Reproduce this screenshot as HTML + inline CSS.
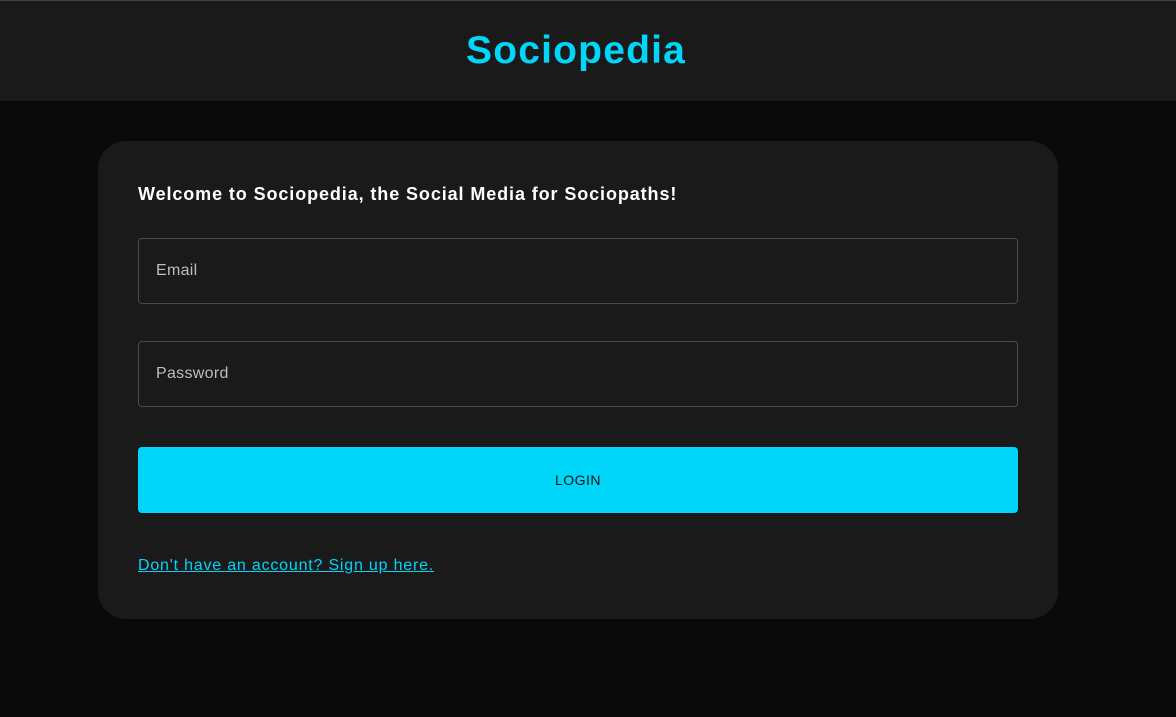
<!DOCTYPE html>
<html><head><style>
*{box-sizing:border-box;margin:0;padding:0}
body{width:1176px;height:717px;background:#0a0a0a;font-family:"Liberation Sans",sans-serif;overflow:hidden;position:relative}
.top{position:absolute;left:0;top:0;width:1176px;height:1px;background:#444}
.hdr{position:absolute;left:0;top:1px;width:1176px;height:100px;background:#1a1a1a}
.hdr span{position:absolute;left:466px;top:28px;width:220px;text-align:center;font-size:39px;font-weight:bold;color:#00d5fa;letter-spacing:1.2px;line-height:44px;white-space:nowrap}
.card{position:absolute;left:98px;top:141px;width:960px;height:478px;background:#1a1a1a;border-radius:28px}
.welcome{position:absolute;left:40px;top:43px;font-size:18px;font-weight:bold;color:#fff;letter-spacing:0.9px;white-space:nowrap}
.inp{position:absolute;left:40px;width:880px;height:66px;border:1px solid #4a4a4a;border-radius:4px;color:#bdbdbd;font-size:16px;padding:23px 17px;letter-spacing:0.3px}
.btn{position:absolute;left:40px;top:306px;width:880px;height:66px;background:#00d5fa;border-radius:4px;text-align:center;line-height:66px;font-size:14px;color:#111;letter-spacing:0.5px}
.link{position:absolute;left:40px;top:416px;color:#00d5fa;font-size:16px;text-decoration:underline;letter-spacing:0.8px;white-space:nowrap}
</style></head><body>
<div class="top"></div>
<div class="hdr"><span>Sociopedia</span></div>
<div class="card">
<div class="welcome">Welcome to Sociopedia, the Social Media for Sociopaths!</div>
<div class="inp" style="top:97px">Email</div>
<div class="inp" style="top:200px">Password</div>
<div class="btn">LOGIN</div>
<div class="link">Don't have an account? Sign up here.</div>
</div>
</body></html>
